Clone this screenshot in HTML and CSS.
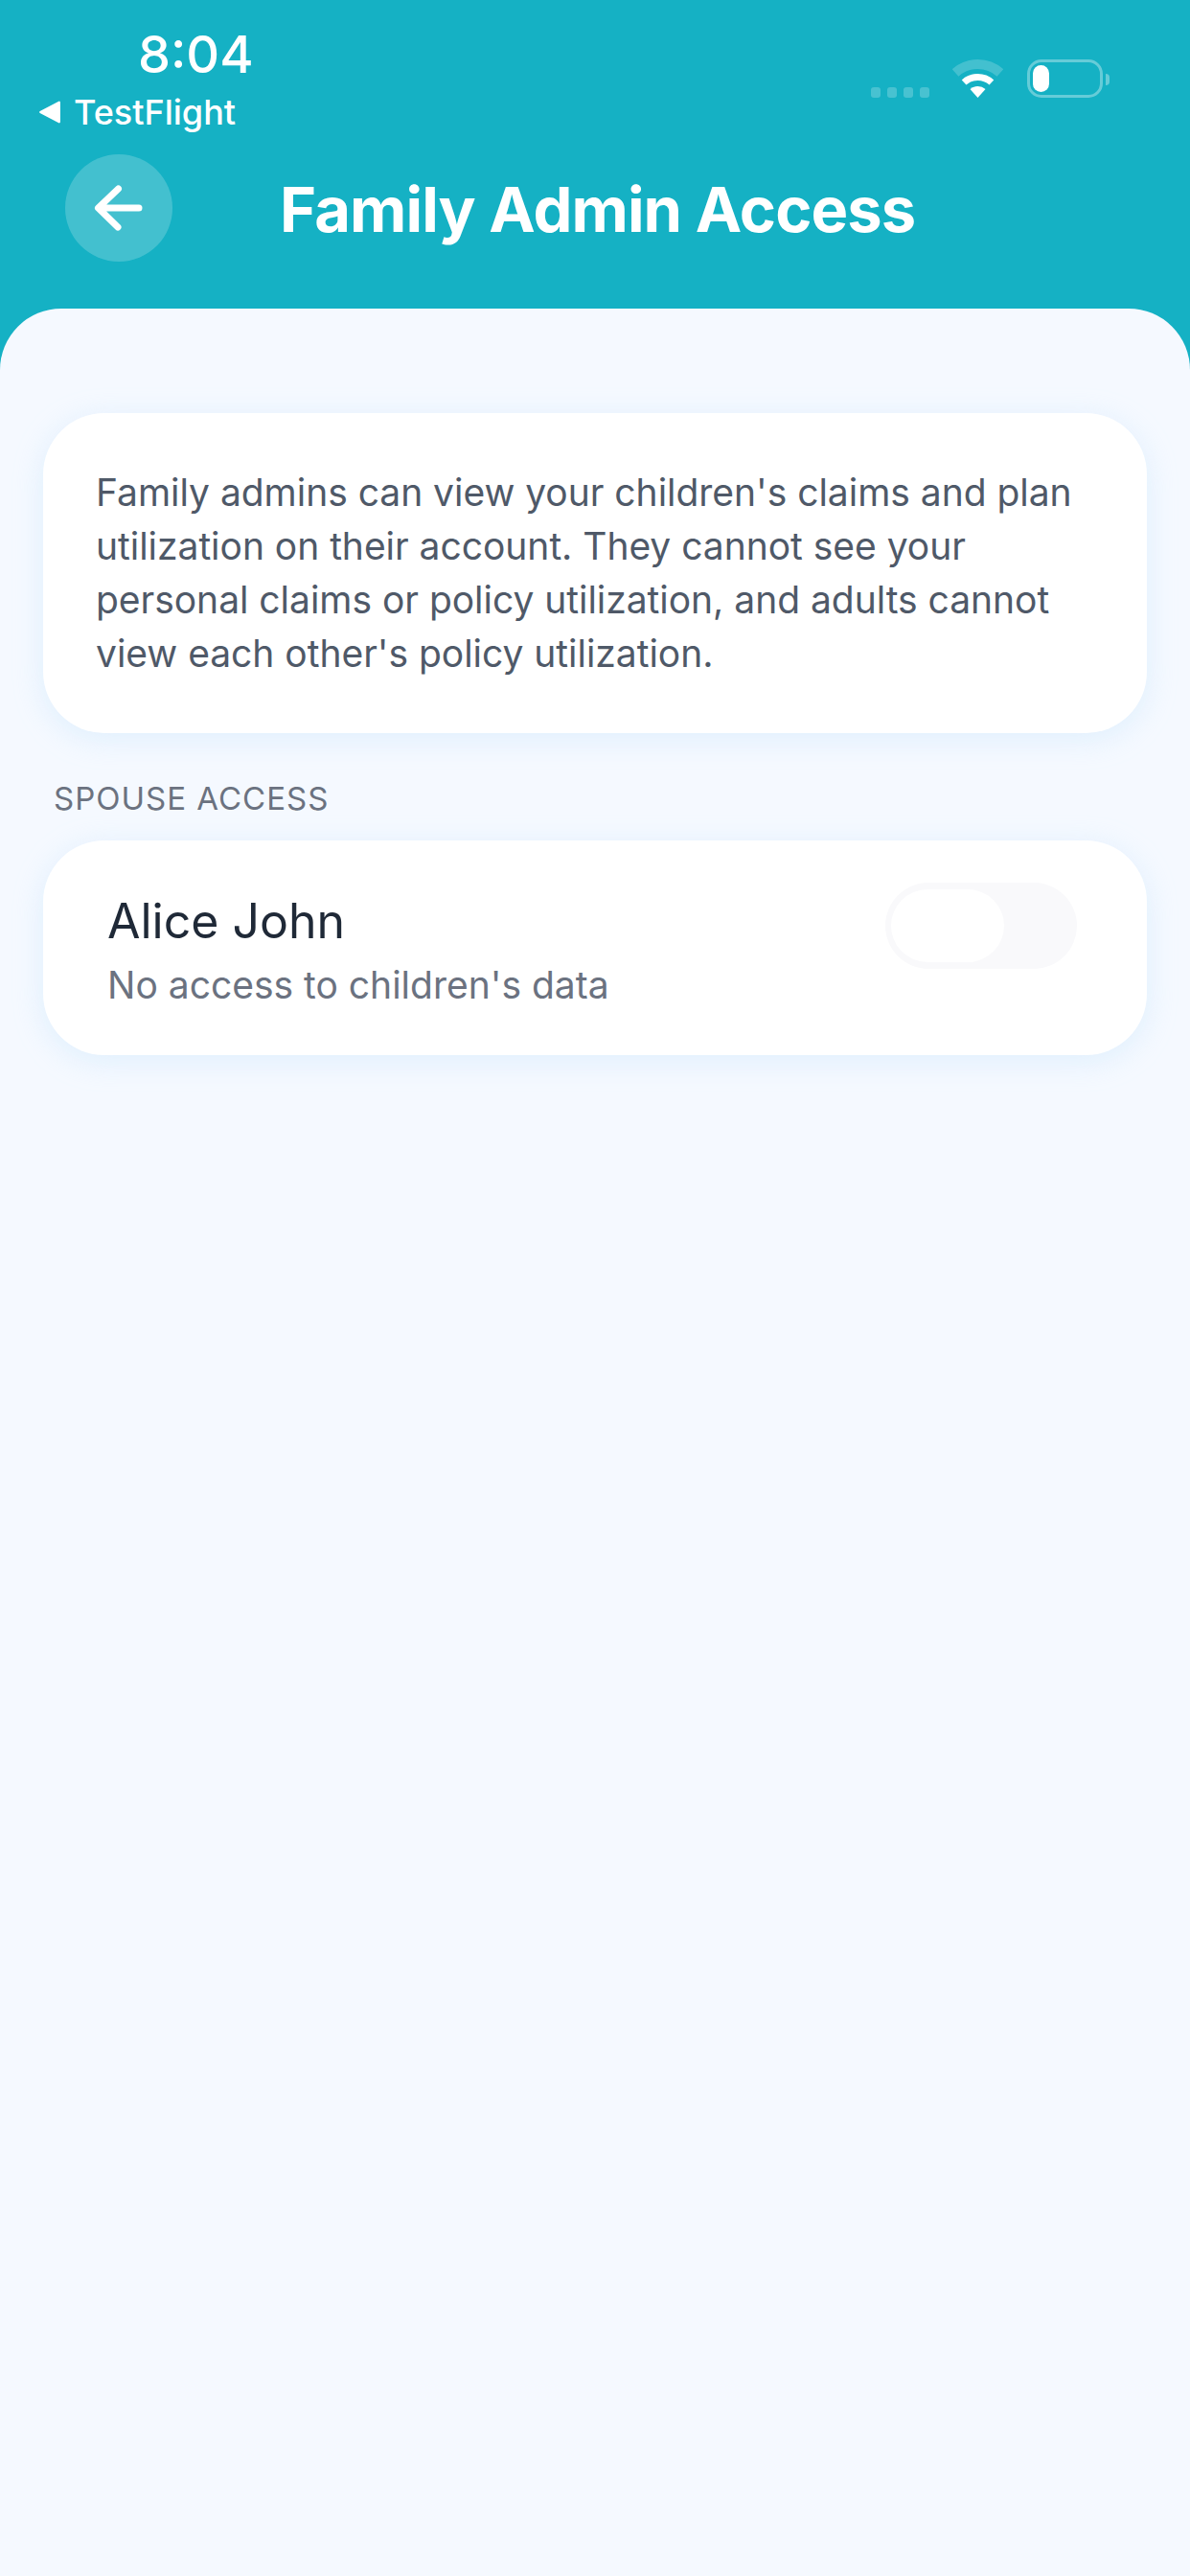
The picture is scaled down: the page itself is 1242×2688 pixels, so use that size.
FILE: index.html
```html
<!DOCTYPE html>
<html lang="en">
<head>
  <meta charset="UTF-8">
  <title>Family Admin Access</title>
  <link rel="stylesheet" href="styles.css">
</head>
<body>

  <header class="cabecalho">
    <div class="status">
      <div class="status-esq">
        <div class="hora">8:04</div>
        <div class="voltar-app">
          <svg class="triangulo" width="24" height="24" viewBox="0 0 22 22">
            <path d="M2 11 L20 1.5 V20.5 Z" fill="#fff" stroke="#fff" stroke-width="2" stroke-linejoin="round"/>
          </svg>
          <span>TestFlight</span>
        </div>
      </div>
      <div class="status-dir">
        <div class="sinal">
          <span></span><span></span><span></span><span></span>
        </div>
        <svg class="wifi" width="53" height="40" viewBox="0 0 53 40">
          <path d="M3.1 14 A35 35 0 0 1 49.9 14" fill="none" stroke="#fff" stroke-opacity="0.2" stroke-width="10"/>
          <path d="M12.1 24 A21.5 21.5 0 0 1 40.9 24" fill="none" stroke="#fff" stroke-width="7"/>
          <path d="M26.5 40 L18.5 31.1 A12 12 0 0 1 34.5 31.1 Z" fill="#fff"/>
        </svg>
        <div class="bateria"><div class="carga"></div></div>
        <div class="bateria-ponta"></div>
      </div>
    </div>

    <div class="titulo-linha">
      <button class="botao-voltar" aria-label="Back">
        <svg width="56" height="56" viewBox="0 0 56 56">
          <path d="M49 28 H7 M27.5 8 L6.5 28 L27 48" fill="none" stroke="#fff" stroke-width="7" stroke-linecap="round" stroke-linejoin="round"/>
        </svg>
      </button>
      <h1>Family Admin Access</h1>
    </div>
  </header>

  <main class="folha">
    <section class="cartao cartao-info">
      <p>Family admins can view your children's claims and plan utilization on their account. They cannot see your personal claims or policy utilization, and adults cannot view each other's policy utilization.</p>
    </section>

    <h2 class="rotulo">SPOUSE ACCESS</h2>

    <section class="cartao cartao-pessoa">
      <div class="pessoa">
        <div class="nome">Alice John</div>
        <div class="detalhe">No access to children's data</div>
      </div>
      <div class="chave"><div class="chave-botao"></div></div>
    </section>
  </main>

</body>
</html>
```

FILE: styles.css
```css
* {
  box-sizing: border-box;
}

body {
  margin: 0;
  min-height: 2688px;
  background-color: #15b1c4;
  font-family: Inter, "Noto Sans", sans-serif;
  display: flex;
  flex-direction: column;
}

.cabecalho {
  height: 322px;
  color: #ffffff;
}

.status {
  display: flex;
  justify-content: space-between;
  height: 161px;
}

.status-esq {
  padding: 24px 0 0 40px;
}

.hora {
  margin-left: 104px;
  font-size: 54px;
  font-weight: 500;
  line-height: 66px;
}

.voltar-app {
  display: flex;
  align-items: center;
  gap: 13px;
  margin-top: 5px;
  font-size: 36px;
  font-weight: 500;
  line-height: 44px;
}

.status-dir {
  display: flex;
  align-items: flex-start;
  padding: 62px 84px 0 0;
}

.sinal {
  display: flex;
  gap: 6.5px;
  margin: 29px 0 0 0;
}

.sinal span {
  width: 10.5px;
  height: 11px;
  border-radius: 3px;
  background-color: rgba(255, 255, 255, 0.22);
}

.wifi {
  margin-left: 24px;
}

.bateria {
  width: 79px;
  height: 40px;
  margin-left: 25px;
  padding: 3px;
  border: 3px solid rgba(255, 255, 255, 0.35);
  border-radius: 15px;
}

.carga {
  width: 17px;
  height: 28px;
  border-radius: 9px;
  background-color: #ffffff;
}

.bateria-ponta {
  width: 4px;
  height: 12px;
  margin: 15px 0 0 3px;
  border-radius: 0 6px 6px 0;
  background-color: rgba(255, 255, 255, 0.35);
}

.titulo-linha {
  display: flex;
  align-items: flex-start;
  padding-left: 68px;
}

.botao-voltar {
  display: flex;
  align-items: center;
  justify-content: center;
  width: 112px;
  height: 112px;
  padding: 0;
  border: none;
  border-radius: 50%;
  background-color: rgba(255, 255, 255, 0.2);
}

h1 {
  margin: 2px 0 0 112px;
  font-size: 65px;
  font-weight: 700;
  letter-spacing: -0.9px;
  line-height: 112px;
}

.folha {
  flex: 1;
  padding: 109px 45px 0;
  border-radius: 64px 64px 0 0;
  background-color: #f5f9ff;
}

.cartao {
  border-radius: 64px;
  background-color: #ffffff;
  box-shadow: 0 6px 30px rgba(190, 225, 250, 0.4);
}

.cartao-info {
  height: 334px;
  padding: 55px 55px;
}

.cartao-info p {
  margin: 0;
  font-size: 39px;
  letter-spacing: -0.03px;
  line-height: 56px;
  color: #4f5968;
}

.rotulo {
  margin: 0;
  padding: 48px 11px 0;
  height: 112px;
  font-size: 33px;
  font-weight: 400;
  letter-spacing: 1px;
  line-height: 40px;
  color: #6b7280;
}

.cartao-pessoa {
  display: flex;
  justify-content: space-between;
  height: 224px;
  padding: 54px 73px 0 67px;
}

.nome {
  font-size: 50px;
  line-height: 60px;
  font-weight: 400;
  color: #1f2937;
}

.detalhe {
  margin-top: 12px;
  font-size: 39px;
  line-height: 50px;
  color: #6b7280;
}

.chave {
  width: 200px;
  height: 90px;
  margin-top: -10px;
  padding: 7px 6px;
  border-radius: 45px;
  background-color: #f9f9fb;
}

.chave-botao {
  width: 118px;
  height: 76px;
  border-radius: 38px;
  background-color: #ffffff;
}
```
